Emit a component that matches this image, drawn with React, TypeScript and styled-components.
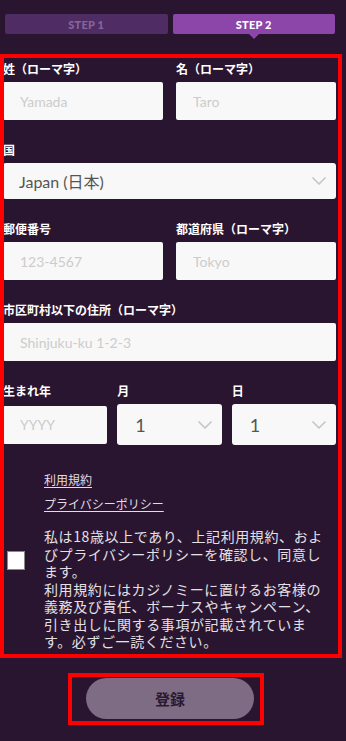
import styled, { createGlobalStyle } from 'styled-components';

const GlobalStyle = createGlobalStyle`
  html, body {
    margin: 0;
    padding: 0;
    background: #2a1530;
  }
  body {
    font-family: Lato, "Noto Sans CJK JP", sans-serif;
    color: #fff;
  }
  * {
    box-sizing: border-box;
  }
`;

const Chevron = () => (
  <svg width="14" height="8" viewBox="0 0 14 8" fill="none">
    <polyline points="1,1 7,7 13,1" stroke="#c6c6c6" strokeWidth="1.7" strokeLinecap="round" strokeLinejoin="round" />
  </svg>
);

export default function App() {
  return (
    <Page>
      <GlobalStyle />
      <Tabs>
        <Tab>STEP 1</Tab>
        <Tab $active>STEP 2</Tab>
      </Tabs>

      <FormSection>
        <TwoCols>
          <Field>
            <Label>姓（ローマ字）</Label>
            <TextInput placeholder="Yamada" />
          </Field>
          <Field>
            <Label>名（ローマ字）</Label>
            <TextInput placeholder="Taro" />
          </Field>
        </TwoCols>

        <Field>
          <Label>国</Label>
          <SelectBox $height={36} $pad={16}>
            <SelectValue $size={16}>Japan (日本)</SelectValue>
            <Chevron />
          </SelectBox>
        </Field>

        <TwoCols>
          <Field>
            <Label>郵便番号</Label>
            <TextInput placeholder="123-4567" />
          </Field>
          <Field>
            <Label>都道府県（ローマ字）</Label>
            <TextInput placeholder="Tokyo" />
          </Field>
        </TwoCols>

        <Field>
          <Label>市区町村以下の住所（ローマ字）</Label>
          <TextInput placeholder="Shinjuku-ku 1-2-3" />
        </Field>

        <DateGrid>
          <Label>生まれ年</Label>
          <Label>月</Label>
          <Label>日</Label>
          <TextInput placeholder="YYYY" />
          <SelectBox $height={41} $pad={18}>
            <SelectValue $size={18}>1</SelectValue>
            <Chevron />
          </SelectBox>
          <SelectBox $height={41} $pad={18}>
            <SelectValue $size={18}>1</SelectValue>
            <Chevron />
          </SelectBox>
        </DateGrid>

        <AgreeRow>
          <CheckBox type="checkbox" />
          <AgreeColumn>
            <Links>
              <TermsLink href="#">利用規約</TermsLink>
              <TermsLink href="#">プライバシーポリシー</TermsLink>
            </Links>
            <AgreeText>
              私は18歳以上であり、上記利用規約、およびプライバシーポリシーを確認し、同意します。
              <br />
              利用規約にはカジノミーに置けるお客様の義務及び責任、ボーナスやキャンペーン、引き出しに関する事項が記載されています。必ずご一読ください。
            </AgreeText>
          </AgreeColumn>
        </AgreeRow>
      </FormSection>

      <ButtonWrap>
        <SubmitButton type="button">登録</SubmitButton>
      </ButtonWrap>
    </Page>
  );
}

const Page = styled.div`
  width: 346px;
  min-height: 741px;
  background: #2a1530;
  display: flex;
  flex-direction: column;
`;

const Tabs = styled.div`
  display: grid;
  grid-template-columns: 1fr 1fr;
  gap: 5px;
  padding: 14px 11px 0 5px;
`;

const Tab = styled.div<{ $active?: boolean }>`
  position: relative;
  height: 20px;
  border-radius: 2px;
  display: flex;
  align-items: center;
  justify-content: center;
  font-family: Lato, sans-serif;
  font-size: 11px;
  font-weight: 900;
  letter-spacing: 0.2px;
  background: ${({ $active }) => ($active ? '#8c45a8' : '#4f2c63')};
  color: ${({ $active }) => ($active ? '#ffffff' : '#86659a')};

  &::after {
    content: '';
    display: ${({ $active }) => ($active ? 'block' : 'none')};
    position: absolute;
    left: 50%;
    top: 100%;
    margin-left: -5px;
    border-left: 5px solid transparent;
    border-right: 5px solid transparent;
    border-top: 5px solid #8c45a8;
  }
`;

const FormSection = styled.div`
  position: relative;
  margin-top: 20px;
  padding: 7px 10px 7px 3px;
  display: flex;
  flex-direction: column;
  gap: 22px;

  &::after {
    content: '';
    position: absolute;
    top: 0;
    left: 0;
    right: 4px;
    bottom: 0;
    border: 4px solid #ff0000;
    pointer-events: none;
  }
`;

const TwoCols = styled.div`
  display: grid;
  grid-template-columns: 1fr 1fr;
  gap: 13px;
`;

const Field = styled.div`
  display: flex;
  flex-direction: column;
  gap: 5px;
`;

const Label = styled.div`
  font-family: "Noto Sans CJK JP", sans-serif;
  font-size: 12px;
  font-weight: 700;
  line-height: 16px;
  color: #ffffff;
`;

const TextInput = styled.input`
  width: 100%;
  height: 38px;
  border: none;
  border-radius: 2px;
  background: #f8f8f8;
  padding: 0 17px;
  font-family: Lato, "Noto Sans CJK JP", sans-serif;
  font-size: 14px;
  color: #555;
  outline: none;

  &::placeholder {
    color: #cccccc;
  }
`;

const SelectBox = styled.div<{ $height: number; $pad: number }>`
  height: ${({ $height }) => $height}px;
  background: #f8f8f8;
  border-radius: 3px;
  display: flex;
  align-items: center;
  justify-content: space-between;
  padding: 0 10px 0 ${({ $pad }) => $pad}px;
`;

const SelectValue = styled.span<{ $size: number }>`
  font-family: Lato, "Noto Sans CJK JP", sans-serif;
  font-size: ${({ $size }) => $size}px;
  color: #555;
`;

const DateGrid = styled.div`
  display: grid;
  grid-template-columns: repeat(3, 1fr);
  column-gap: 10px;
  row-gap: 5px;
  align-items: center;
`;

const AgreeRow = styled.div`
  display: flex;
  align-items: center;
  margin-top: 4px;
  padding-left: 4px;
`;

const CheckBox = styled.input`
  appearance: none;
  width: 18px;
  height: 19px;
  margin: 0 19px 0 0;
  flex-shrink: 0;
  background: #ffffff;
  border: 1px solid #8a8a8a;
  border-radius: 0;
`;

const AgreeColumn = styled.div`
  display: flex;
  flex-direction: column;
  gap: 15px;
  width: 285px;
`;

const Links = styled.div`
  display: flex;
  flex-direction: column;
  align-items: flex-start;
  gap: 6px;
`;

const TermsLink = styled.a`
  font-family: "Noto Sans CJK JP", sans-serif;
  font-size: 12px;
  line-height: 18px;
  color: #e2dde3;
  text-decoration: underline;
  text-underline-offset: 2px;
`;

const AgreeText = styled.p`
  margin: 0;
  font-family: "Noto Sans CJK JP", sans-serif;
  font-size: 14px;
  line-height: 17.5px;
  letter-spacing: 0.6px;
  color: #e4e0e5;
`;

const ButtonWrap = styled.div`
  position: relative;
  align-self: flex-start;
  margin: 15px 0 0 68px;
  padding: 5px 10px 6px 18px;

  &::after {
    content: '';
    position: absolute;
    inset: 0;
    border: 4px solid #ff0000;
    pointer-events: none;
  }
`;

const SubmitButton = styled.button`
  width: 168px;
  height: 41px;
  border: none;
  border-radius: 21px;
  background: #7e6c84;
  color: #2b1a30;
  font-family: "Noto Sans CJK JP", sans-serif;
  font-size: 15px;
  font-weight: 700;
  cursor: pointer;
`;
